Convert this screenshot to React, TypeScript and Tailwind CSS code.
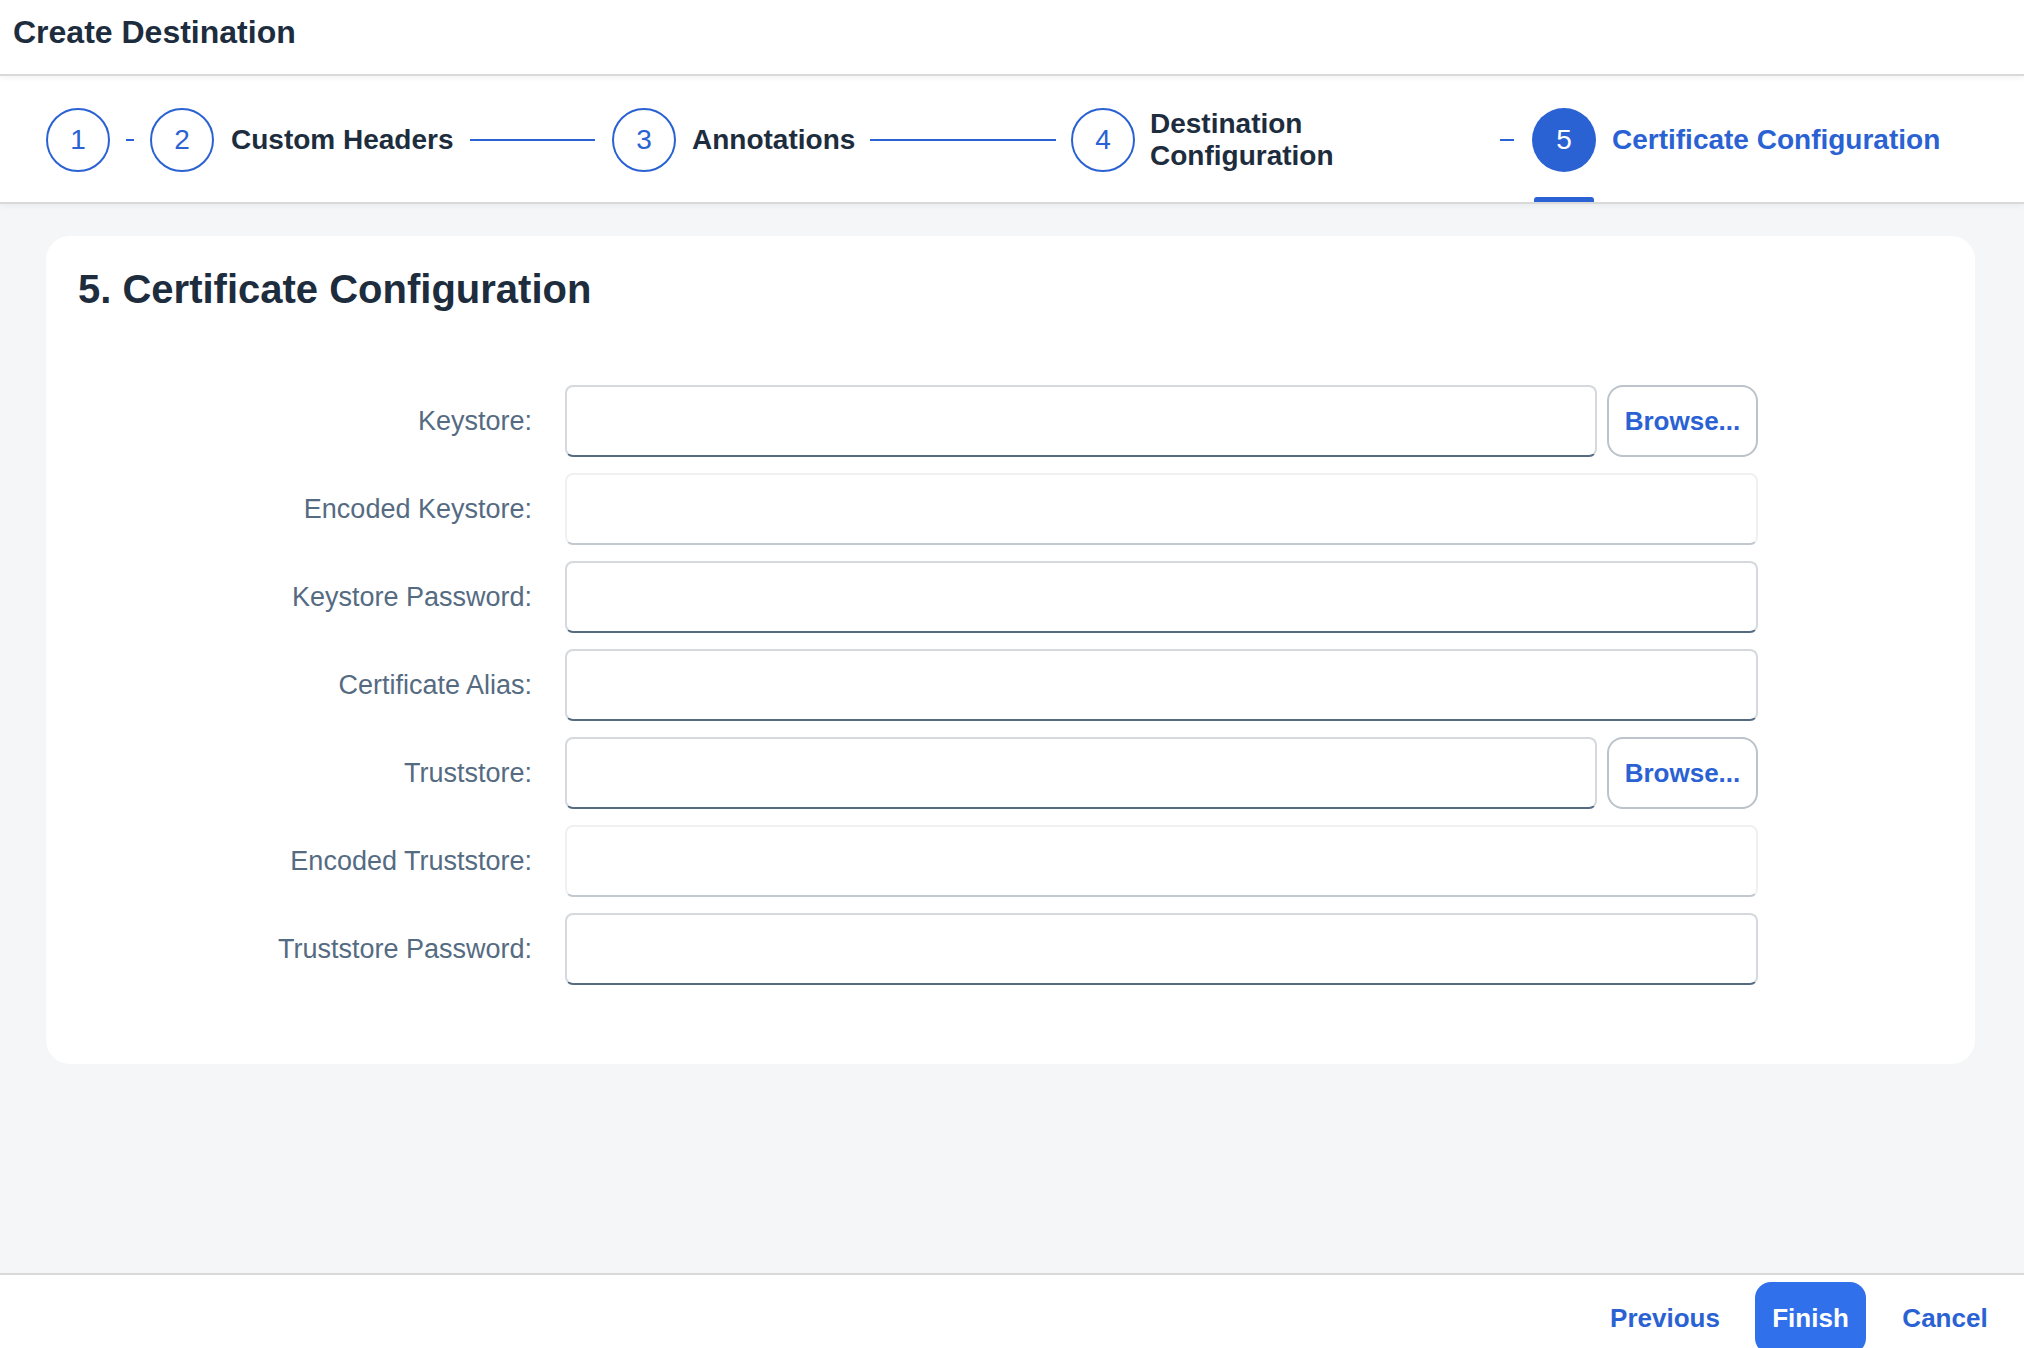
import React from "react";

const BLUE = "text-[#2a62d3]";

const StepCircle = ({ n, active }: { n: number; active?: boolean }) => (
	<div
		className={
			active
				? "w-[64px] h-[64px] shrink-0 rounded-full bg-[#2a62d3] text-white flex items-center justify-center text-[28px]"
				: "w-[64px] h-[64px] shrink-0 rounded-full border-2 border-[#2a62d3] text-[#2a62d3] bg-white flex items-center justify-center text-[28px]"
		}
	>
		{n}
	</div>
);

const fields = [
	{ label: "Keystore:", browse: true },
	{ label: "Encoded Keystore:", muted: true },
	{ label: "Keystore Password:" },
	{ label: "Certificate Alias:" },
	{ label: "Truststore:", browse: true },
	{ label: "Encoded Truststore:", muted: true },
	{ label: "Truststore Password:" },
];

const Field = ({ muted }: { muted?: boolean }) => (
	<input
		className={
			muted
				? "h-[72px] w-full min-w-0 flex-1 rounded-[8px] border-2 border-[#eef0f2] border-b-[#c2c8cf] bg-white outline-none"
				: "h-[72px] w-full min-w-0 flex-1 rounded-[8px] border-2 border-[#d5d9dd] border-b-[#556b82] bg-white outline-none"
		}
	/>
);

export default function App() {
	return (
		<div
			className="h-[1348px] w-full flex flex-col overflow-hidden bg-[#f5f6f7] text-[#1d2d3e]"
			style={{ fontFamily: '"Liberation Sans", Arial, sans-serif' }}
		>
			{/* header */}
			<div className="relative z-20 h-[76px] shrink-0 bg-white border-b-2 border-[#d9d9d9] shadow-[0_2px_6px_rgba(0,0,0,0.05)] pl-[13px] pt-[12px]">
				<h1 className="text-[32px] leading-[40px] font-bold">Create Destination</h1>
			</div>

			{/* wizard steps */}
			<div className="relative z-10 h-[128px] shrink-0 bg-white border-b-2 border-[#d9d9d9] shadow-[0_2px_6px_rgba(0,0,0,0.05)] flex items-center pl-[46px] pt-[2px]">
				<StepCircle n={1} />
				<div className="ml-[16px] mr-[16px] w-[8px] h-[2px] bg-[#2a62d3] shrink-0" />

				<div className="w-[462px] shrink-0 flex items-center">
					<StepCircle n={2} />
					<span className="ml-[17px] text-[28px] font-bold whitespace-nowrap">Custom Headers</span>
					<div className="ml-[16px] mr-[17px] flex-1 h-[2px] bg-[#2a62d3]" />
				</div>

				<div className="w-[459px] shrink-0 flex items-center">
					<StepCircle n={3} />
					<span className="ml-[16px] text-[28px] font-bold whitespace-nowrap">Annotations</span>
					<div className="ml-[15px] mr-[15px] flex-1 h-[2px] bg-[#2a62d3]" />
				</div>

				<div className="w-[461px] shrink-0 flex items-center">
					<StepCircle n={4} />
					<span className="ml-[15px] text-[28px] leading-[32px] font-bold">
						Destination
						<br />
						Configuration
					</span>
					<div className="flex-1" />
					<div className="mr-[18px] w-[14px] h-[2px] bg-[#2a62d3]" />
				</div>

				<div className="relative self-stretch flex items-center">
					<StepCircle n={5} active />
					<span className={`ml-[16px] text-[28px] font-bold whitespace-nowrap ${BLUE}`}>
						Certificate Configuration
					</span>
					<div className="absolute left-[2px] bottom-0 w-[60px] h-[5px] rounded-t-[3px] bg-[#2a62d3]" />
				</div>
			</div>

			{/* content */}
			<div className="flex-1 pt-[32px] pl-[46px] pr-[49px]">
				<div className="bg-white rounded-[24px] pt-[29px] pb-[79px] px-[32px]">
					<h2 className="text-[40px] leading-[48px] font-bold">5. Certificate Configuration</h2>
					<div className="mt-[72px] grid grid-cols-[454px_1193px] gap-x-[33px] gap-y-[16px]">
						{fields.map((f) => (
							<React.Fragment key={f.label}>
								<label className="flex items-center justify-end text-[27px] text-[#556b82] whitespace-nowrap">
									{f.label}
								</label>
								<div className="flex gap-[10px]">
									<Field muted={f.muted} />
									{f.browse && (
										<button
											className={`h-[72px] w-[151px] shrink-0 rounded-[16px] border-2 border-[#bcc3ca] bg-white text-[26px] font-bold ${BLUE}`}
										>
											Browse...
										</button>
									)}
								</div>
							</React.Fragment>
						))}
					</div>
				</div>
			</div>

			{/* footer */}
			<div className="h-[75px] shrink-0 bg-white border-t-2 border-[#d9d9d9] flex justify-end items-start pt-[7px] pr-[22px]">
				<button className={`h-[72px] w-[134px] text-[26px] font-bold ${BLUE}`}>Previous</button>
				<button className="ml-[23px] h-[72px] w-[111px] rounded-[16px] bg-[#3070ea] text-white text-[26px] font-bold">
					Finish
				</button>
				<button className={`ml-[22px] h-[72px] w-[114px] text-[26px] font-bold ${BLUE}`}>Cancel</button>
			</div>
		</div>
	);
}
